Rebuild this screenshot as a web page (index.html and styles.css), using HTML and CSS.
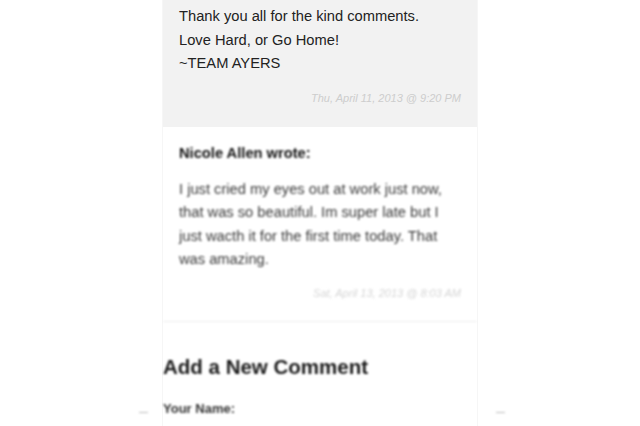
FILE: index.html
```html
<!DOCTYPE html>
<html lang="en">
  <head>
    <meta charset="UTF-8" />
    <title>Comments</title>
    <link rel="stylesheet" href="styles.css">
  </head>
  <body>
    <main class="comments">
      <article class="comment owner">
        <p class="tekst">
          Thank you all for the kind comments.<br />
          Love Hard, or Go Home!<br />
          ~TEAM AYERS
        </p>
        <p class="dato">Thu, April 11, 2013 @ 9:20 PM</p>
      </article>

      <section class="sloret">
        <article class="comment">
          <h3>Nicole Allen wrote:</h3>
          <p class="tekst">
            I just cried my eyes out at work just now, that was so beautiful.
            Im super late but I just wacth it for the first time today. That
            was amazing.
          </p>
          <p class="dato">Sat, April 13, 2013 @ 8:03 AM</p>
        </article>

        <section class="ny">
          <h2>Add a New Comment</h2>
          <div class="felt">
            <span class="kant"></span>
            <label>Your Name:</label>
            <span class="kant"></span>
          </div>
        </section>
      </section>
    </main>
  </body>
</html>
```

FILE: styles.css
```css
body {
  margin: 0;
  padding: 0;
  background-color: #ffffff;
  font-family: "Liberation Sans", Arial, sans-serif;
  color: #222222;
  overflow: hidden;
}

.comments {
  width: 316px;
  margin: 0 auto;
  border-left: 1px solid #f6f6f6;
  border-right: 1px solid #f6f6f6;
  min-height: 426px;
  box-sizing: border-box;
}

.comment {
  padding: 0 16px;
}

.owner {
  background-color: #f2f2f2;
  padding-top: 5px;
  padding-bottom: 23px;
}

.tekst {
  margin: 0;
  font-size: 14.7px;
  line-height: 23.5px;
}

.dato {
  margin: 0;
  margin-top: 16px;
  text-align: right;
  font-size: 11px;
  font-style: italic;
  color: #cdcdcd;
}

.sloret {
  filter: blur(1.3px);
}

.sloret .comment {
  padding-top: 18px;
  padding-bottom: 22px;
  border-bottom: 1px solid #eeeeee;
}

h3 {
  margin: 0 0 17px 0;
  font-size: 14.7px;
  font-weight: bold;
  color: #111111;
}

.sloret .tekst {
  font-size: 14.7px;
  line-height: 23.5px;
  color: #3a3a3a;
}

.sloret .dato {
  margin-top: 15px;
  color: #d6d6d6;
}

.ny {
  padding-top: 33px;
}

h2 {
  margin: 0 0 22px 0;
  font-size: 20.5px;
  font-weight: bold;
  color: #1a1a1a;
}

/* the name field row, its edges poke out past the column */
.felt {
  display: flex;
  align-items: center;
  margin: 0 -28px 0 -24px;
  gap: 15px;
}

.felt label {
  flex: 1;
  font-size: 13px;
  font-weight: bold;
  color: #333333;
}

.kant {
  width: 9px;
  height: 1px;
  margin-top: 8px;
  background-color: #bbbbbb;
}
```
